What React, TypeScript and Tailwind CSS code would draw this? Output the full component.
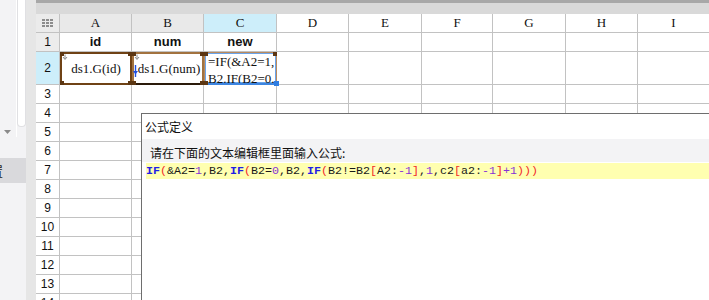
import React from "react";

const cols = [
  { label: "A", w: "w-[72px]", bg: "bg-[#e9e9e9]" },
  { label: "B", w: "w-[72px]", bg: "bg-[#e9e9e9]" },
  { label: "C", w: "w-[73px]", bg: "bg-[#cdeefa]" },
  { label: "D", w: "w-[72px]", bg: "bg-white" },
  { label: "E", w: "w-[73px]", bg: "bg-white" },
  { label: "F", w: "w-[71px]", bg: "bg-white" },
  { label: "G", w: "w-[73px]", bg: "bg-white" },
  { label: "H", w: "w-[72px]", bg: "bg-white" },
  { label: "I", w: "w-[72px]", bg: "bg-white" },
];

const rowNums = [3, 4, 5, 6, 7, 8, 9, 10, 11, 12, 13, 14];

const code: [string, string][] = [
  ["IF", "k"], ["(", "r"], ["&A2=", "t"], ["1", "n"], [",B2,", "t"],
  ["IF", "k"], ["(", "r"], ["B2=", "t"], ["0", "n"], [",B2,", "t"],
  ["IF", "k"], ["(", "r"], ["B2!=B2", "t"], ["[", "r"], ["A2:", "t"], ["-1", "n"], ["]", "r"],
  [",", "t"], ["1", "n"], [",c2", "t"], ["[", "r"], ["a2:", "t"], ["-1", "n"], ["]", "r"],
  ["+1", "n"], [")))", "r"],
];

const tokenClass: Record<string, string> = {
  k: "font-bold text-[#1f1fe6]",
  r: "text-[#f22a2a]",
  n: "text-[#8733d6]",
  t: "text-[#1a1a1a]",
};

const line = "border-[#c2c2c2]";

const Corner = ({ pos }: { pos: string }) => (
  <div className={`absolute h-[4px] w-[4px] bg-[#5c3612] ${pos}`} />
);

const TinyArrow = () => (
  <svg className="absolute left-[0px] top-[0px]" width="6" height="6" viewBox="0 0 6 6">
    <path d="M3 0.5V5M1 3l2 2.5L5 3" stroke="#8c8c8c" strokeWidth="1" fill="none" />
  </svg>
);

const LeftPanel = () => (
  <div className="flex w-[26px] shrink-0 flex-col bg-[#f3f3f5]">
    <div className="flex h-[137px] shrink-0">
      <div className="flex w-[16px] flex-col justify-end pb-[3px] pl-[4px]">
        <svg width="7" height="4" viewBox="0 0 7 4">
          <path d="M0 0h7L3.5 4z" fill="#8a8a8a" />
        </svg>
      </div>
      <div className="w-px bg-white" />
      <div className="w-[9px]">
        <div className="h-[127px] rounded-b-[4px] border border-t-0 border-[#e0e0e3] bg-white" />
      </div>
    </div>
    <div className="h-[21px] shrink-0" />
    <div className="h-[25px] shrink-0 overflow-hidden bg-[#d9d9dc]">
      <span className="-ml-[10px] block font-['Noto_Sans_CJK_SC',sans-serif] text-[13px] leading-[25px] text-[#222]">
        置
      </span>
    </div>
  </div>
);

const Sheet = () => (
  <div className="flex flex-col">
    {/* column header */}
    <div className="flex h-[19px] shrink-0">
      <div className={`flex w-[24px] shrink-0 items-center justify-center border-r border-b ${line} bg-[#ebebeb]`}>
        <svg width="11" height="8" viewBox="0 0 11 8">
          {[0, 4, 8].map((x) =>
            [0, 3, 6].map((y) => <rect key={`${x}-${y}`} x={x} y={y} width="3" height="2" fill="#8c8c8c" />)
          )}
        </svg>
      </div>
      {cols.map((c) => (
        <div
          key={c.label}
          className={`flex shrink-0 items-center justify-center border-r border-b ${line} ${c.w} ${c.bg} font-['Liberation_Serif',serif] text-[13px] text-[#111]`}
        >
          {c.label}
        </div>
      ))}
    </div>

    {/* row 1 */}
    <div className="flex h-[19px] shrink-0">
      <div className={`flex w-[24px] shrink-0 items-center justify-center border-r border-b ${line} bg-[#ececec] text-[12px] text-[#111]`}>
        1
      </div>
      {cols.map((c, i) => (
        <div
          key={c.label}
          className={`flex shrink-0 items-center justify-center border-r border-b ${line} ${c.w} text-[13px] font-bold text-[#111]`}
        >
          {["id", "num", "new"][i] ?? ""}
        </div>
      ))}
    </div>

    {/* row 2 */}
    <div className="flex h-[33px] shrink-0">
      <div className={`flex w-[24px] shrink-0 items-center justify-center border-r border-b ${line} bg-[#cdeefa] text-[12px] text-[#111]`}>
        2
      </div>
      <div className="relative flex w-[72px] shrink-0 items-center justify-center border-2 border-[#6f4215] font-['Liberation_Serif',serif] text-[13px] text-[#111]">
        <TinyArrow />
        ds1.G(id)
        <Corner pos="-left-[2px] -top-[2px]" />
        <Corner pos="-right-[2px] -top-[2px]" />
        <Corner pos="-left-[2px] -bottom-[2px]" />
        <Corner pos="-right-[2px] -bottom-[2px]" />
      </div>
      <div className="relative flex w-[72px] shrink-0 items-center justify-center border-2 border-b-[#2a1a0a] border-[#a2723f] pl-[2px] font-['Liberation_Serif',serif] text-[13px] text-[#111]">
        <TinyArrow />
        <svg className="absolute -left-[1px] top-[11px]" width="5" height="12" viewBox="0 0 5 12">
          <path d="M2.5 0v12" stroke="#1f4fe0" strokeWidth="1.4" />
          <path d="M0 6l2.5 3.5L5 6z" fill="#1f4fe0" />
        </svg>
        ds1.G(num)
        <Corner pos="-left-[2px] -top-[2px]" />
        <Corner pos="-right-[2px] -top-[2px]" />
        <Corner pos="-left-[2px] -bottom-[2px]" />
        <Corner pos="-right-[2px] -bottom-[2px]" />
      </div>
      <div className="relative w-[73px] shrink-0 border border-b-2 border-[#b98a5e] border-b-[#3d85e0] shadow-[inset_0_0_0_1px_#6aa4ea]">
        <div className="h-full overflow-hidden pl-[3px] font-['Liberation_Serif',serif] text-[13px] leading-[17px] text-[#111]">
          <div>=IF(&amp;A2=1,</div>
          <div>B2.IF(B2=0.</div>
        </div>
        <Corner pos="-left-[1px] -top-[1px]" />
        <Corner pos="-right-[1px] -top-[1px]" />
        <Corner pos="-left-[1px] -bottom-[2px]" />
        <div className="absolute -right-[3px] -bottom-[3px] h-[5px] w-[5px] bg-[#2f7de1]" />
      </div>
      {cols.slice(3).map((c) => (
        <div key={c.label} className={`shrink-0 border-r border-b ${line} ${c.w}`} />
      ))}
    </div>

    {rowNums.map((n) => (
      <div key={n} className="flex h-[19px] shrink-0">
        <div className={`flex w-[24px] shrink-0 items-center justify-center border-r border-b ${line} bg-white text-[12px] text-[#111]`}>
          {n}
        </div>
        {cols.map((c) => (
          <div key={c.label} className={`shrink-0 border-r border-b ${line} ${c.w}`} />
        ))}
      </div>
    ))}
  </div>
);

const FormulaDialog = () => (
  <div className="absolute left-[141px] top-[113px] flex h-[220px] w-[600px] flex-col border-l border-t border-[#6e6e6e] bg-white">
    <div className="h-[25px] shrink-0 pl-[3px] font-['Noto_Sans_CJK_SC',sans-serif] text-[12px] leading-[26px] text-[#111]">
      公式定义
    </div>
    <div className="h-[23px] shrink-0 bg-[#f3f3f5] pl-[8px] pt-[6px] font-['Noto_Sans_CJK_SC',sans-serif] text-[12px] leading-[15px] text-[#111]">
      请在下面的文本编辑框里面输入公式:
    </div>
    <div className="flex-1 bg-white pl-[4px] pt-[1px]">
      <div className="h-[16px] whitespace-pre bg-[#ffffb0] font-['Liberation_Mono',monospace] text-[11.67px] leading-[16px]">
        {code.map(([t, k], i) => (
          <span key={i} className={tokenClass[k]}>
            {t}
          </span>
        ))}
      </div>
    </div>
  </div>
);

export default function App() {
  return (
    <div className="relative flex h-[300px] w-[709px] overflow-hidden bg-white font-['Liberation_Sans',sans-serif]">
      <LeftPanel />
      <div className="w-[10px] shrink-0 bg-[#e6e6e6]" />
      <div className="flex min-w-0 flex-1 flex-col">
        <div className="h-[3px] shrink-0 bg-[#a8a8a8]" />
        <div className="h-[11px] shrink-0 bg-[#d9d9d9]" />
        <Sheet />
      </div>
      <FormulaDialog />
    </div>
  );
}
